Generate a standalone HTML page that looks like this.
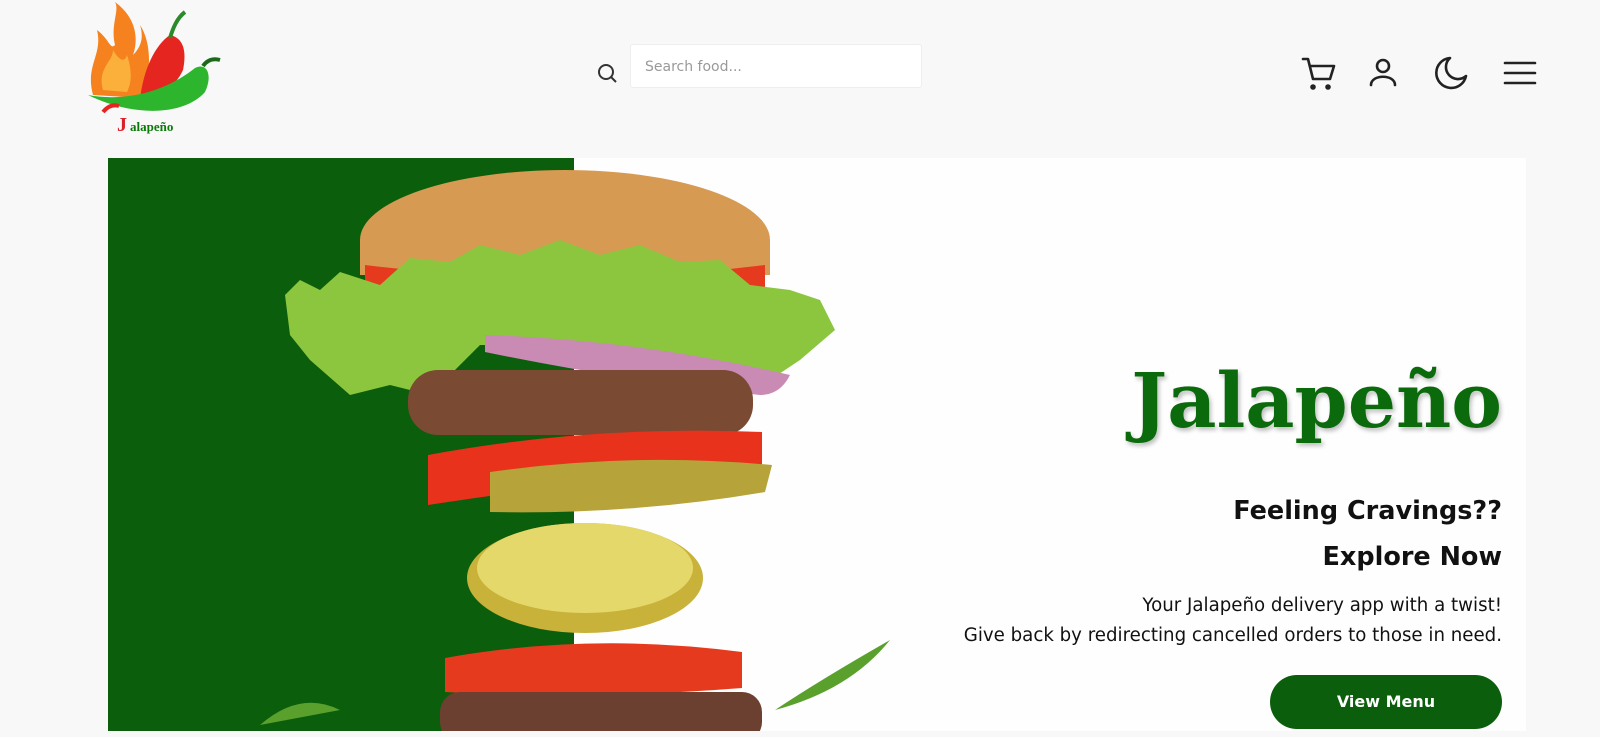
<!DOCTYPE html>
<html><head><meta charset="utf-8"><style>
body{margin:0;width:1600px;height:737px;background:#f8f8f8;font-family:"DejaVu Sans","Liberation Sans",sans-serif;overflow:hidden;position:relative}
.search{position:absolute;left:630px;top:44px;width:292px;height:44px;background:#fff;border:1px solid #eee;border-radius:3px;box-sizing:border-box;padding:14px 14px;font-size:14px;color:#999}
.hero{position:absolute;left:108px;top:158px;width:1418px;height:573px;background:#fefefe;overflow:hidden}
.green{position:absolute;left:0;top:0;width:466px;height:573px;background:#0b5e0b}
.title{position:absolute;right:24px;top:198px;font-family:"DejaVu Serif","Liberation Serif",serif;font-weight:bold;font-size:76px;color:#0b6a0b;text-shadow:2px 3px 4px rgba(0,0,0,.25)}
.h3{position:absolute;right:24px;font-weight:bold;font-size:25.5px;color:#111}
.p{position:absolute;right:24px;font-size:18.2px;color:#111}
.btn{position:absolute;right:24px;top:517px;width:232px;height:54px;border-radius:27px;background:#0b5e0b;color:#fff;font-weight:bold;font-size:16px;text-align:center;line-height:54px}
</style></head><body>
<svg style="position:absolute;left:85px;top:0" width="150" height="140" viewBox="0 0 150 140">
<path d="M8 95 C0 65 18 55 12 30 C25 40 25 50 30 45 C25 25 35 10 30 2 C48 15 55 35 48 55 C58 45 58 35 55 25 C68 45 65 75 58 98 Z" fill="#f5821f"/>
<path d="M18 90 C12 68 28 62 28 50 C35 62 40 62 42 55 C47 70 47 82 42 92Z" fill="#fbb03b"/>
<path d="M55 100 C58 70 70 45 85 35 C98 38 102 50 98 70 C90 88 72 98 55 100Z" fill="#e52520"/>
<path d="M85 38 C88 28 92 18 100 12" stroke="#2a8a2a" stroke-width="4" fill="none"/>
<path d="M3 95 C40 102 80 92 110 68 C122 62 128 75 120 92 C100 115 50 118 3 95Z" fill="#2db52d"/>
<path d="M118 66 C122 60 128 58 135 60" stroke="#1a6a1a" stroke-width="4" fill="none"/>
<path d="M18 112 C23 106 28 104 34 106" stroke="#e52520" stroke-width="4" fill="none"/>
<text x="32" y="131" font-family="Liberation Serif" font-weight="bold" font-size="20" fill="#d9232a">J</text>
<text x="45" y="131" font-family="Liberation Serif" font-weight="bold" font-size="13" fill="#0b7a0b">alapeño</text>
</svg>
<svg style="position:absolute;left:596px;top:62px" width="22" height="22" viewBox="0 0 22 22"><circle cx="10" cy="10" r="7" stroke="#333" stroke-width="2" fill="none"/><path d="M15 15 L20 20" stroke="#333" stroke-width="2"/></svg>
<div class="search">Search food...</div>
<svg style="position:absolute;left:1300px;top:54px" width="240" height="40" viewBox="0 0 240 40" fill="none" stroke="#222" stroke-width="2.6" stroke-linecap="round" stroke-linejoin="round">
<path d="M3 5 H8 L13 25 H30 L34 12 H10"/><circle cx="13" cy="33" r="1.5" fill="#222"/><circle cx="28" cy="33" r="1.5" fill="#222"/>
<circle cx="83" cy="12" r="6"/><path d="M71 31 C71 20 95 20 95 31"/>
<path d="M150 4 A15 15 0 1 0 166 22 A12 12 0 0 1 150 4Z"/>
<path d="M205 9 H235 M205 19 H235 M205 29 H235"/>
</svg>
<div class="hero">
<div class="green"></div>
<svg style="position:absolute;left:0;top:0" width="900" height="573" viewBox="108 158 900 573">
<ellipse cx="565" cy="240" rx="205" ry="70" fill="#d79a52"/>
<rect x="360" y="240" width="410" height="35" fill="#d79a52"/>
<path d="M365 265 Q565 290 765 265 L765 305 Q565 320 365 300Z" fill="#e53a1e"/>
<path d="M285 295 L300 280 L320 290 L340 272 L380 285 L410 258 L450 262 L480 245 L520 255 L560 240 L600 255 L640 245 L680 262 L720 260 L750 285 L790 290 L820 300 L835 330 L800 360 L770 380 L740 370 L700 365 L640 355 L560 345 L480 345 L430 395 L390 385 L350 395 L310 360 L290 335Z" fill="#8cc63e"/>
<path d="M485 335 Q640 340 790 375 Q780 395 760 395 Q620 380 485 352Z" fill="#c98ab3"/>
<rect x="408" y="370" width="345" height="65" rx="30" fill="#7a4a32"/>
<path d="M428 455 Q590 425 762 432 L762 465 Q590 480 428 505Z" fill="#e8321c"/>
<path d="M490 472 Q630 452 772 465 L765 492 Q630 515 490 512Z" fill="#b6a33a"/>
<ellipse cx="585" cy="578" rx="118" ry="55" fill="#c9b23a"/>
<ellipse cx="585" cy="568" rx="108" ry="45" fill="#e5d86a"/>
<path d="M445 658 Q590 632 742 652 L742 688 Q590 700 445 692Z" fill="#e63a1f"/>
<rect x="440" y="692" width="322" height="50" rx="20" fill="#6b4030"/>
<path d="M775 710 Q820 680 890 640 Q850 690 775 710Z" fill="#5aa02c"/>
<path d="M260 725 Q300 690 340 710 Z" fill="#5aa02c"/>
</svg>
<div class="title">Jalapeño</div>
<div class="h3" style="top:338px">Feeling Cravings??</div>
<div class="h3" style="top:384px">Explore Now</div>
<div class="p" style="top:437px">Your Jalapeño delivery app with a twist!</div>
<div class="p" style="top:467px">Give back by redirecting cancelled orders to those in need.</div>
<div class="btn">View Menu</div>
</div>
</body></html>
